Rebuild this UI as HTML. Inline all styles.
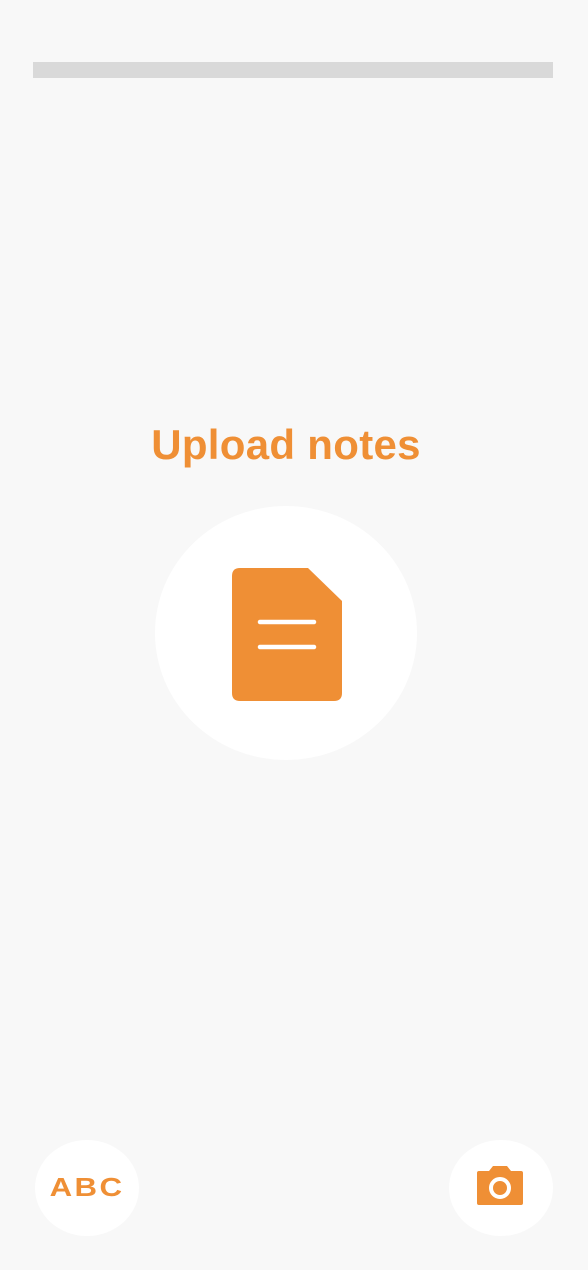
<!DOCTYPE html>
<html><head><style>
body{margin:0;width:588px;height:1270px;background:#f8f8f8;position:relative;overflow:hidden;font-family:"Liberation Sans",sans-serif}
.bar{position:absolute;left:33px;top:62px;width:520px;height:16px;background:#d9d9d9}
h1{position:absolute;left:0;width:572px;top:421px;margin:0;text-align:center;font-size:42px;font-weight:bold;color:#ef8f35;letter-spacing:0.3px}
.c{position:absolute;background:#fff;border-radius:50%}
</style></head><body>
<div class="bar"></div>
<h1>Upload notes</h1>
<div class="c" style="left:155px;top:506px;width:262px;height:254px"></div>
<svg style="position:absolute;left:0;top:0" width="588" height="1270">
<path d="M240 568 H308 L342 601 V693 Q342 701 334 701 H240 Q232 701 232 693 V576 Q232 568 240 568 Z" fill="#ef8f35"/>
<path d="M260 622 H314 M260 647 H314" stroke="#fff" stroke-width="4.5" stroke-linecap="round"/>
</svg>
<div class="c" style="left:35px;top:1140px;width:104px;height:96px"></div>
<div class="c" style="left:449px;top:1140px;width:104px;height:96px"></div>
<div style="position:absolute;left:37px;top:1172px;width:100px;text-align:center;font-size:26px;line-height:30px;font-weight:900;color:#ef8f35;letter-spacing:2px;transform:scaleX(1.2)">ABC</div>
<svg style="position:absolute;left:0;top:0" width="588" height="1270">
<path d="M479 1171 H489 L493 1166 H507 L511 1171 H521 Q523 1171 523 1173 V1203 Q523 1205 521 1205 H479 Q477 1205 477 1203 V1173 Q477 1171 479 1171 Z" fill="#ef8f35"/>
<circle cx="500" cy="1188" r="9" fill="none" stroke="#fff" stroke-width="4"/>
</svg>
</body></html>
